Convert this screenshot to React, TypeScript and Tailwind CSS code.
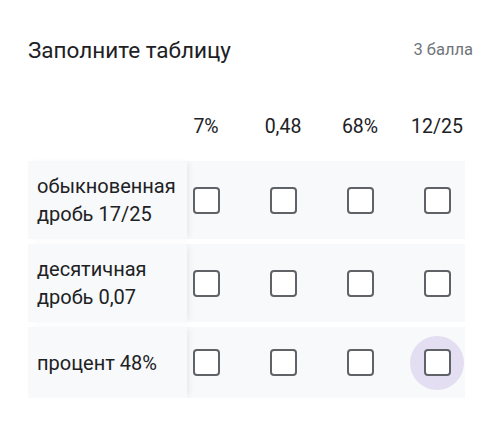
const columns = ["7%", "0,48", "68%", "12/25"];

const rows = [
  { label: ["обыкновенная", "дробь 17/25"], height: "h-[78px]" },
  { label: ["десятичная", "дробь 0,07"], height: "h-[78px]" },
  { label: ["процент 48%"], height: "h-[71px]" },
];

function Checkbox({ focused }: { focused?: boolean }) {
  return (
    <div className="relative flex w-[26px] items-center justify-center">
      {focused && (
        <div className="absolute left-1/2 top-1/2 h-[54px] w-[54px] -translate-x-1/2 -translate-y-1/2 rounded-full bg-[#e4def2]" />
      )}
      <div className="relative h-[27px] w-[27px] shrink-0 rounded-[4px] border-[2.75px] border-[#5f6368] bg-white" />
    </div>
  );
}

export default function App() {
  return (
    <div
      className="h-[423px] w-[500px] overflow-hidden bg-white text-[#202124]"
      style={{ fontFamily: "Roboto, 'Noto Sans', sans-serif" }}
    >
      <div className="flex items-center justify-between pl-[28px] pr-[27px] pt-[37px]">
        <h1 className="text-[22.5px] leading-[26px]">Заполните таблицу</h1>
        <span className="text-[16.5px] leading-[26px] text-[#70757a]">3 балла</span>
      </div>

      <div className="ml-[28px] mt-[49px] w-[437px] overflow-hidden">
        {/* header */}
        <div className="flex h-[30px] items-center">
          <div className="w-[159px] shrink-0" />
          <div className="flex gap-[51px] pl-[6px]">
            {columns.map((c) => (
              <div
                key={c}
                className="flex w-[26px] justify-center whitespace-nowrap text-[19.5px] leading-[30px]"
              >
                {c}
              </div>
            ))}
          </div>
        </div>

        <div className="mt-[19px] flex flex-col gap-[5px]">
          {rows.map((r, ri) => (
            <div key={ri} className={`flex ${r.height} bg-[#f8f9fa]`}>
              <div className="relative z-10 flex w-[159px] shrink-0 flex-col justify-center bg-[#f8f9fa] pl-[9px] text-[20px] leading-[28px] shadow-[4px_0_6px_-2px_rgba(0,0,0,0.07)]">
                {r.label.map((l) => (
                  <span key={l} className="whitespace-nowrap">
                    {l}
                  </span>
                ))}
              </div>
              <div className="flex items-center gap-[51px] pl-[6px]">
                {columns.map((c, ci) => (
                  <Checkbox key={c} focused={ri === 2 && ci === 3} />
                ))}
              </div>
            </div>
          ))}
        </div>
      </div>
    </div>
  );
}
